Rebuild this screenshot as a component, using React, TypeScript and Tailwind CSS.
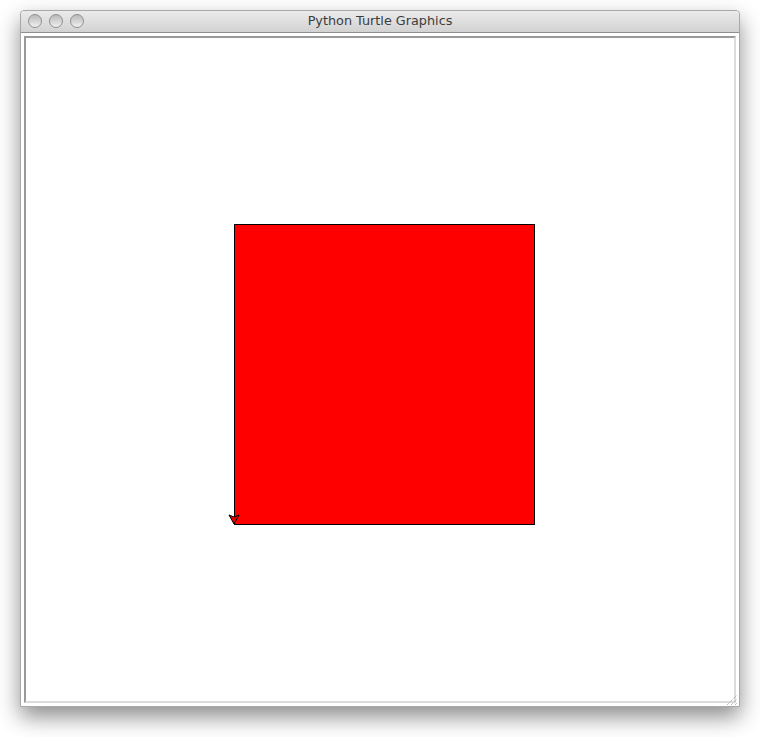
export default function App() {
  return (
    <div className="w-[760px] h-[737px] bg-white pt-[10px] pl-[20px]">
      <div className="w-[720px] h-[697px] flex flex-col bg-white border border-[#a8a8a8] rounded-t-[4px] shadow-[0_10px_22px_rgba(0,0,0,0.45)]">
        {/* Title bar */}
        <div className="relative h-[22px] flex items-center justify-center rounded-t-[4px] bg-gradient-to-b from-[#ebebeb] to-[#d2d2d2] border-b border-[#8e8e8e]">
          <div className="absolute left-[7px] top-[3px] flex gap-[7px]">
            <span className="w-[14px] h-[14px] rounded-full border border-[#8f8f8f] bg-gradient-to-b from-[#b9b9b9] to-[#f0f0f0]" />
            <span className="w-[14px] h-[14px] rounded-full border border-[#8f8f8f] bg-gradient-to-b from-[#b9b9b9] to-[#f0f0f0]" />
            <span className="w-[14px] h-[14px] rounded-full border border-[#8f8f8f] bg-gradient-to-b from-[#b9b9b9] to-[#f0f0f0]" />
          </div>
          <span className="text-[12.8px] leading-none text-[#3c3c3c] font-['Lucida_Grande','DejaVu_Sans',sans-serif]">
            Python Turtle Graphics
          </span>
        </div>

        {/* Body */}
        <div className="relative flex-1 p-[3px]">
          <div className="w-[712px] h-[667px] border-2 border-t-[#9a9a9a] border-l-[#9a9a9a] border-r-[#dcdcdc] border-b-[#dcdcdc] bg-white">
            <svg width="708" height="663" className="block">
              <rect x="208.5" y="186.5" width="300" height="300" fill="#ff0000" stroke="#000" strokeWidth="1" />
              <polygon points="208,486 203,477 208,479 213,477" fill="#e00000" stroke="#000" strokeWidth="1" />
            </svg>
          </div>
          {/* resize grip */}
          <svg width="12" height="12" className="absolute right-[2px] bottom-[1px]">
            <line x1="2" y1="12" x2="12" y2="2" stroke="#9a9a9a" strokeDasharray="1 1" />
            <line x1="6" y1="12" x2="12" y2="6" stroke="#9a9a9a" strokeDasharray="1 1" />
            <line x1="10" y1="12" x2="12" y2="10" stroke="#9a9a9a" strokeDasharray="1 1" />
          </svg>
        </div>
      </div>
    </div>
  );
}
